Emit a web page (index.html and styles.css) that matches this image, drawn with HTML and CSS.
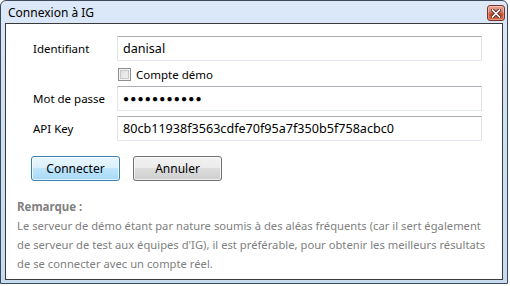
FILE: index.html
```html
<!DOCTYPE html>
<html lang="fr">
<head>
<meta charset="utf-8">
<title>Connexion à IG</title>
<link rel="stylesheet" href="styles.css">
</head>
<body>
<div class="window">
  <div class="titlebar">
    <span class="title">Connexion à IG</span>
    <span class="close" aria-label="Fermer">
      <svg width="10" height="9" viewBox="0 0 10 9">
        <path d="M1.5 1 L8.5 8 M8.5 1 L1.5 8" stroke="#4a2a20" stroke-width="3.4" stroke-linecap="square"/>
        <path d="M1.5 1 L8.5 8 M8.5 1 L1.5 8" stroke="#ffffff" stroke-width="1.6" stroke-linecap="square"/>
      </svg>
    </span>
  </div>
  <div class="client">
    <div class="form">
      <label class="lbl">Identifiant</label>
      <div class="field">danisal</div>
      <span></span>
      <div class="check"><span class="box"></span><span>Compte démo</span></div>
      <label class="lbl">Mot de passe</label>
      <div class="field pwd">●●●●●●●●●●●</div>
      <label class="lbl">API Key</label>
      <div class="field">80cb11938f3563cdfe70f95a7f350b5f758acbc0</div>
    </div>
    <div class="buttons">
      <button class="btn default">Connecter</button>
      <button class="btn">Annuler</button>
    </div>
    <div class="remark">
      <div class="remark-title">Remarque :</div>
      <p>Le serveur de démo étant par nature soumis à des aléas fréquents (car il sert également<br>de serveur de test aux équipes d'IG), il est préférable, pour obtenir les meilleurs résultats<br>de se connecter avec un compte réel.</p>
    </div>
  </div>
</div>
</body>
</html>
```
FILE: styles.css
```css
* { box-sizing: border-box; }
html, body { margin: 0; padding: 0; }
body {
  width: 510px;
  height: 286px;
  background: #ffffff;
  font-family: "Noto Sans", "Open Sans", sans-serif;
  font-size: 11.5px;
  color: #000;
  overflow: hidden;
}
.window {
  width: 508px;
  height: 284px;
  border: 1px solid #3d4a58;
  border-radius: 6px 6px 0 0;
  background: linear-gradient(#dde9f9, #d0e1f4 30%, #c8dbf1);
  padding: 0 4px 3px 4px;
  display: flex;
  flex-direction: column;
}
.titlebar {
  height: 22px;
  display: flex;
  align-items: flex-start;
  justify-content: space-between;
}
.title {
  margin: 4px 0 0 3px;
  font-size: 12px;
  line-height: 15px;
  color: #000;
}
.close {
  margin-top: 4px;
  margin-right: -2px;
  width: 18px;
  height: 16px;
  border: 1px solid #7b3226;
  border-radius: 3px;
  background: linear-gradient(#e9a595, #d97b64 45%, #c94a2e 55%, #d5674a);
  display: flex;
  align-items: center;
  justify-content: center;
  box-shadow: inset 0 0 0 1px rgba(255,255,255,0.35);
}
.client {
  flex: 1;
  background: #ffffff;
  border: 1px solid #3a3a3a;
  padding: 12px 20px 0 11px;
}
.form {
  display: grid;
  grid-template-columns: 84px 1fr;
  grid-template-rows: 25px 25px 25px 30px;
  padding-left: 16px;
}
.form > :nth-child(n+7) { margin-top: 5px; }
.lbl {
  display: flex;
  align-items: center;
}
.field {
  height: 25px;
  border: 1px solid #dfe3e9;
  border-top-color: #abadb3;
  border-left-color: #e2e3ea;
  border-bottom-color: #e3e9ef;
  padding: 0 0 1px 5px;
  display: flex;
  align-items: center;
  font-size: 12.6px;
  white-space: nowrap;
}
.field.pwd {
  font-size: 10px;
  letter-spacing: 1.2px;
}
.check {
  display: flex;
  align-items: center;
  gap: 5px;
  padding-left: 1px;
  padding-top: 1px;
}
.box {
  width: 13px;
  height: 13px;
  border: 1px solid #8e8f8f;
  background: linear-gradient(135deg, #dcdcdc, #f4f4f4);
  box-shadow: inset 0 0 0 1px #f4f4f4, inset 0 0 0 2px #c8c8c8;
}
.buttons {
  display: flex;
  gap: 13px;
  margin-top: 15px;
  padding-left: 14px;
}
.btn {
  width: 89px;
  height: 25px;
  font-family: inherit;
  font-size: 12px;
  color: #000;
  border: 1px solid #707070;
  border-radius: 3px;
  background: linear-gradient(#f2f2f2 0%, #ebebeb 50%, #dddddd 50%, #cfcfcf 100%);
  box-shadow: inset 0 0 0 1px rgba(255,255,255,0.7);
  padding: 0 0 1px 0;
}
.btn.default {
  border-color: #3c7fb1;
  background: linear-gradient(#eaf6fd 0%, #d9f0fc 50%, #bee6fd 50%, #a7d9f5 100%);
}
.remark {
  margin-top: 16px;
  color: #808080;
  line-height: 19px;
  font-size: 11.2px;
}
.remark-title { font-weight: bold; font-size: 11.5px; }
.remark p { margin: 0; white-space: nowrap; letter-spacing: 0.02px; }
```
